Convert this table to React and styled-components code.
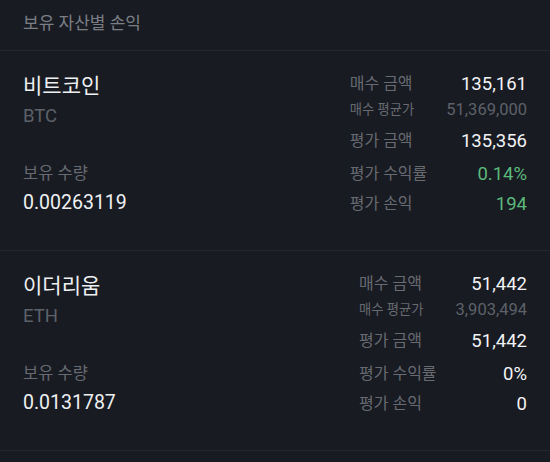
import React from "react";
import styled, { createGlobalStyle } from "styled-components";

const GlobalStyle = createGlobalStyle`
  html, body {
    margin: 0;
    padding: 0;
    background-color: #181b22;
  }
  body {
    font-family: Roboto, "Noto Sans CJK KR", "Noto Sans", sans-serif;
  }
`;

const Page = styled.div`
  width: 550px;
  height: 462px;
  overflow: hidden;
  background-color: #181b22;
`;

const Header = styled.div`
  height: 51px;
  box-sizing: border-box;
  padding: 10px 23px 0;
  border-bottom: 1px solid #23272e;
  font-size: 17px;
  line-height: 26px;
  color: #7b7e85;
`;

const Section = styled.div`
  height: 200px;
  box-sizing: border-box;
  padding: 23px 23px 0;
  border-bottom: 1px solid #22262d;
  display: flex;
  justify-content: space-between;
  align-items: flex-start;
`;

const Left = styled.div`
  display: flex;
  flex-direction: column;
`;

const Name = styled.div`
  font-size: 21px;
  line-height: 24px;
  color: #eef0f2;
`;

const Ticker = styled.div`
  margin-top: 6px;
  font-size: 18.5px;
  line-height: 24px;
  color: #5d6169;
`;

const HoldLabel = styled.div`
  margin-top: 36px;
  font-size: 16.5px;
  line-height: 20px;
  color: #676a71;
`;

const Amount = styled.div`
  margin-top: 7px;
  font-size: 19.5px;
  line-height: 24px;
  color: #eef0f2;
`;

const Stats = styled.div`
  margin-top: -3px;
  display: grid;
  grid-template-columns: auto auto;
  column-gap: 19px;
`;

const Label = styled.div`
  margin-top: ${(p) => p.$mt}px;
  font-size: ${(p) => (p.$sub ? 13.3 : 16)}px;
  line-height: ${(p) => (p.$sub ? 24 : 26)}px;
  color: #676a71;
  white-space: nowrap;
`;

const Value = styled.div`
  margin-top: ${(p) => p.$mt}px;
  text-align: right;
  font-size: ${(p) => (p.$sub ? 16.5 : 18.5)}px;
  line-height: ${(p) => (p.$sub ? 24 : 26)}px;
  color: ${(p) =>
    p.$sub ? "#5d6169" : p.$tone === "up" ? "#5bb97b" : "#f2f3f5"};
  white-space: nowrap;
`;

const assets = [
  {
    name: "비트코인",
    ticker: "BTC",
    amount: "0.00263119",
    buy: "135,161",
    avg: "51,369,000",
    evalAmount: "135,356",
    rate: "0.14%",
    profit: "194",
    tone: "up",
  },
  {
    name: "이더리움",
    ticker: "ETH",
    amount: "0.0131787",
    buy: "51,442",
    avg: "3,903,494",
    evalAmount: "51,442",
    rate: "0%",
    profit: "0",
    tone: "flat",
  },
];

const AssetRow = ({ asset }) => {
  const rows = [
    { label: "매수 금액", value: asset.buy, mt: 0 },
    { label: "매수 평균가", value: asset.avg, mt: 1, sub: true },
    { label: "평가 금액", value: asset.evalAmount, mt: 6 },
    { label: "평가 수익률", value: asset.rate, mt: 7, tone: asset.tone },
    { label: "평가 손익", value: asset.profit, mt: 4, tone: asset.tone },
  ];

  return (
    <Section>
      <Left>
        <Name>{asset.name}</Name>
        <Ticker>{asset.ticker}</Ticker>
        <HoldLabel>보유 수량</HoldLabel>
        <Amount>{asset.amount}</Amount>
      </Left>
      <Stats>
        {rows.map((row) => (
          <React.Fragment key={row.label}>
            <Label $mt={row.mt} $sub={row.sub}>
              {row.label}
            </Label>
            <Value $mt={row.mt} $sub={row.sub} $tone={row.tone}>
              {row.value}
            </Value>
          </React.Fragment>
        ))}
      </Stats>
    </Section>
  );
};

const App = () => (
  <Page>
    <GlobalStyle />
    <Header>보유 자산별 손익</Header>
    {assets.map((asset) => (
      <AssetRow key={asset.ticker} asset={asset} />
    ))}
  </Page>
);

export default App;
